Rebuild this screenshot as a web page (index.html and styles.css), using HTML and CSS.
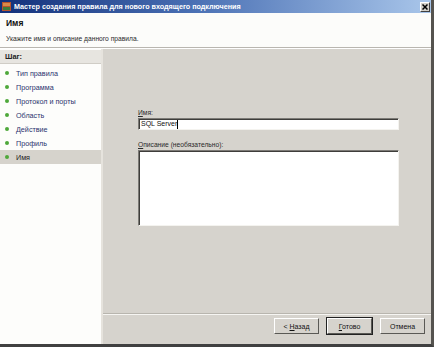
FILE: index.html
```html
<!DOCTYPE html>
<html>
<head>
    <title>Мастер создания правила</title>
    <link rel="stylesheet" href="styles.css">
</head>
<body>
    <div class="window">
        <div class="titlebar">
            <svg class="app-icon" width="9" height="9" viewBox="0 0 9 9">
                <rect x="0" y="0" width="9" height="9" fill="#b5542e"/>
                <rect x="1" y="1" width="7" height="3" fill="#d98a4a"/>
                <rect x="1" y="5" width="7" height="3" fill="#3f7b3a"/>
            </svg>
            <span class="title">Мастер создания правила для нового входящего подключения</span>
            <div class="close-btn">
                <svg width="6" height="6" viewBox="0 0 6 6">
                    <path d="M0.5 0.5 L5.5 5.5 M5.5 0.5 L0.5 5.5" stroke="#000" stroke-width="1.5"/>
                </svg>
            </div>
        </div>
        <div class="header">
            <div class="header-title">Имя</div>
            <div class="header-desc">Укажите имя и описание данного правила.</div>
        </div>
        <div class="main">
            <div class="steps">
                <div class="steps-head">Шаг:</div>
                <div class="step"><span class="dot"></span>Тип правила</div>
                <div class="step"><span class="dot"></span>Программа</div>
                <div class="step"><span class="dot"></span>Протокол и порты</div>
                <div class="step"><span class="dot"></span>Область</div>
                <div class="step"><span class="dot"></span>Действие</div>
                <div class="step"><span class="dot"></span>Профиль</div>
                <div class="step active"><span class="dot"></span>Имя</div>
            </div>
            <div class="content">
                <div class="form">
                    <label class="field-label"><u>И</u>мя:</label>
                    <div class="input">SQL Server<span class="caret"></span></div>
                    <label class="field-label desc-label"><u>О</u>писание (необязательно):</label>
                    <div class="textarea"></div>
                </div>
                <div class="footer">
                    <button class="btn">&lt; <u>Н</u>азад</button>
                    <button class="btn default"><u>Г</u>отово</button>
                    <button class="btn">Отмена</button>
                </div>
            </div>
        </div>
    </div>
</body>
</html>
```
FILE: styles.css
```css
body {
    margin: 0;
    padding: 0;
    background: #d4d0c8;
    font-family: "Liberation Sans", Arial, sans-serif;
}
.window {
    width: 434px;
    height: 347px;
    display: flex;
    flex-direction: column;
    box-sizing: border-box;
    border-right: 3px solid #55534f;
    border-bottom: 3px solid #404040;
    background: #d4d0c8;
}
.titlebar {
    height: 13px;
    display: flex;
    align-items: center;
    padding: 0 1px 0 2px;
    background: linear-gradient(to right, #12307a 0%, #4a70b4 45%, #a9c6ea 100%);
}
.app-icon {
    margin-right: 3px;
}
.title {
    color: #fff;
    font-size: 7.2px;
    font-weight: bold;
    flex: 1;
    white-space: nowrap;
}
.close-btn {
    width: 8px;
    height: 8px;
    background: #d4d0c8;
    border: 1px solid;
    border-color: #fff #404040 #404040 #fff;
    display: flex;
    align-items: center;
    justify-content: center;
}
.header {
    height: 35px;
    background: #fcfcfa;
    border-bottom: 1px solid #b9b6b0;
    box-sizing: border-box;
    padding: 5px 0 0 6px;
}
.header-title {
    font-size: 8.5px;
    font-weight: bold;
    color: #111;
}
.header-desc {
    font-size: 6.7px;
    color: #2a2a2a;
    margin-top: 7px;
}
.main {
    flex: 1;
    display: flex;
    border-top: 1px solid #ffffff;
}
.steps {
    width: 101px;
    background: #fdfdfb;
    border-right: 2px solid #e6e3dd;
    padding-top: 1px;
}
.steps-head {
    height: 13px;
    background: #e7e5e0;
    border-bottom: 1px solid #d0cdc6;
    font-size: 7.4px;
    font-weight: bold;
    color: #222;
    padding-left: 5px;
    line-height: 13px;
    margin-bottom: 2px;
}
.step {
    height: 14px;
    display: flex;
    align-items: center;
    font-size: 7.2px;
    color: #2a336e;
    padding-left: 5px;
}
.step.active {
    background: #d6d3cc;
    color: #222;
}
.dot {
    width: 4px;
    height: 4px;
    border-radius: 50%;
    background: #4ea83a;
    margin-right: 7px;
}
.content {
    flex: 1;
    display: flex;
    flex-direction: column;
    background: #d6d3cd;
}
.form {
    flex: 1;
    padding: 60px 32px 0 35px;
}
.field-label {
    display: block;
    font-size: 6.7px;
    color: #2a2a2a;
    margin-bottom: 2px;
}
.desc-label {
    margin-top: 11px;
}
.input {
    height: 12px;
    background: #fff;
    border: 1px solid;
    border-color: #7c7a76 #f4f3ef #f4f3ef #7c7a76;
    box-shadow: inset 1px 1px 0 #3e3d3a;
    box-sizing: border-box;
    font-size: 7px;
    line-height: 10px;
    padding-left: 2px;
    color: #111;
}
.caret {
    display: inline-block;
    width: 1px;
    height: 9px;
    background: #000;
    vertical-align: middle;
}
.textarea {
    height: 76px;
    background: #fff;
    border: 1px solid;
    border-color: #7c7a76 #f4f3ef #f4f3ef #7c7a76;
    box-shadow: inset 1px 1px 0 #3e3d3a;
    box-sizing: border-box;
}
.footer {
    height: 26px;
    border-top: 1px solid #b8b5ae;
    box-shadow: inset 0 1px 0 #f6f5f2;
    display: flex;
    justify-content: flex-end;
    align-items: flex-start;
    padding: 4px 6px 0 0;
    gap: 6px;
}
.btn {
    width: 45px;
    height: 16px;
    background: #d6d3cd;
    border: 1px solid;
    border-color: #fff #5a5955 #5a5955 #fff;
    font-family: "Liberation Sans", Arial, sans-serif;
    font-size: 7px;
    color: #111;
    padding: 0;
    margin: 0;
}
.btn.default {
    outline: 1px solid #222;
    margin: 0 2px;
}
```
